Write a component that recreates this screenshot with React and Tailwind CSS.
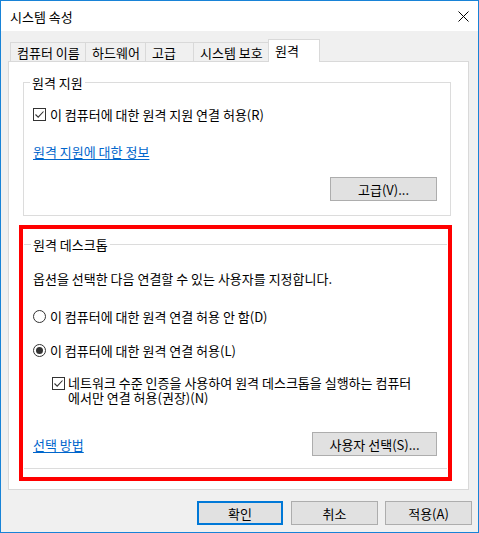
// System Properties dialog — "원격" (Remote) tab
const TABS = [
  { label: "컴퓨터 이름", width: "w-[75px]" },
  { label: "하드웨어", width: "w-[60px]" },
  { label: "고급", width: "w-[48px]" },
  { label: "시스템 보호", width: "w-[75px]" },
];

function CheckBox() {
  return (
    <span className="flex h-[13px] w-[13px] shrink-0 items-center justify-center border border-[#333333] bg-white">
      <svg width="11" height="11" viewBox="0 0 11 11">
        <path d="M1.5 5.5 L4.2 8.2 L9.5 2.5" fill="none" stroke="#333333" strokeWidth="1.1" />
      </svg>
    </span>
  );
}

function Radio({ checked }) {
  return (
    <span className="flex h-[13px] w-[13px] shrink-0 items-center justify-center rounded-full border border-[#333333] bg-white">
      {checked && <span className="h-[7px] w-[7px] rounded-full bg-[#333333]" />}
    </span>
  );
}

function Button({ children, className = "" }) {
  return (
    <button className={`flex h-[24px] items-center justify-center bg-[#e1e1e1] ${className}`}>
      {children}
    </button>
  );
}

export default function App() {
  return (
    <div className="flex h-[533px] w-[479px] flex-col border border-[#1883d7] bg-[#f0f0f0] font-['Noto_Sans_CJK_KR',sans-serif] text-[13px] leading-[15px] text-black">

      {/* ── Title bar ─────────────────────────────────────────────── */}
      <div className="flex h-[30px] shrink-0 items-center justify-between bg-white pl-[9px] pr-[9px]">
        <span>시스템 속성</span>
        <svg width="11" height="11" viewBox="0 0 11 11">
          <path d="M0.5 0.5 L10.5 10.5 M10.5 0.5 L0.5 10.5" stroke="#000" strokeWidth="1" />
        </svg>
      </div>

      <div className="flex flex-1 flex-col pl-[7px] pt-[8px]">

        {/* ── Tabs ────────────────────────────────────────────────── */}
        <div className="flex h-[22px] items-end pl-[2px]">
          {TABS.map(t => (
            <div
              key={t.label}
              className={`flex h-[19px] items-center whitespace-nowrap border-l border-t border-[#d9d9d9] pl-[6px] ${t.width}`}
            >
              {t.label}
            </div>
          ))}
          <div className="relative z-10 -mb-px flex h-[23px] w-[52px] items-center border-l border-r border-t border-[#d9d9d9] bg-white pb-[2px] pl-[6px]">
            원격
          </div>
        </div>

        {/* ── Tab panel ───────────────────────────────────────────── */}
        <div className="flex h-[429px] w-[461px] flex-col border border-[#d9d9d9] bg-white pl-[14px] pr-[17px] pt-[20px]">

          {/* 원격 지원 */}
          <div className="relative flex h-[134px] flex-col border border-[#dcdcdc] pl-[9px] pr-[13px] pt-[24px]">
            <span className="absolute -top-[8px] left-[6px] whitespace-nowrap bg-white px-[2px]">원격 지원</span>
            <label className="flex h-[15px] items-center gap-[4px]">
              <CheckBox />
              <span>이 컴퓨터에 대한 원격 지원 연결 허용(R)</span>
            </label>
            <a className="mt-[22px] self-start text-[#0066cc] underline underline-offset-[2px]">원격 지원에 대한 정보</a>
            <Button className="mt-[18px] w-[107px] self-end border border-[#adadad]">고급(V)...</Button>
          </div>

          {/* 원격 데스크톱 (highlighted) */}
          <div className="-ml-[4px] mt-[9px] w-[433px] border-4 border-[#ff0000] pb-[8px] pt-[15px]">
            <div className="relative mx-[1px] flex flex-col border-b border-t border-[#dcdcdc] pb-[12px] pl-[9px] pr-[10px] pt-[26px]">
              <span className="absolute -top-[8px] left-[7px] whitespace-nowrap bg-white px-[2px]">원격 데스크톱</span>
              <p>옵션을 선택한 다음 연결할 수 있는 사용자를 지정합니다.</p>
              <label className="mt-[23px] flex h-[15px] items-center gap-[4px]">
                <Radio />
                <span>이 컴퓨터에 대한 원격 연결 허용 안 함(D)</span>
              </label>
              <label className="mt-[19px] flex h-[15px] items-center gap-[4px]">
                <Radio checked />
                <span>이 컴퓨터에 대한 원격 연결 허용(L)</span>
              </label>
              <label className="ml-[19px] mt-[17px] flex items-start gap-[3px]">
                <span className="pt-[2px]"><CheckBox /></span>
                <span className="whitespace-nowrap">
                  네트워크 수준 인증을 사용하여 원격 데스크톱을 실행하는 컴퓨터<br />
                  에서만 연결 허용(권장)(N)
                </span>
              </label>
              <div className="mt-[27px] flex items-center justify-between">
                <a className="text-[#0066cc] underline underline-offset-[2px]">선택 방법</a>
                <Button className="w-[125px] border border-[#adadad]">사용자 선택(S)...</Button>
              </div>
            </div>
          </div>
        </div>

        {/* ── Dialog buttons ──────────────────────────────────────── */}
        <div className="mt-[11px] flex justify-end pr-[6px]">
          <Button className="w-[86px] border-2 border-[#0078d7]">확인</Button>
          <Button className="ml-[8px] w-[87px] border border-[#adadad]">취소</Button>
          <Button className="ml-[7px] w-[87px] border border-[#adadad]">적용(A)</Button>
        </div>
      </div>
    </div>
  );
}
